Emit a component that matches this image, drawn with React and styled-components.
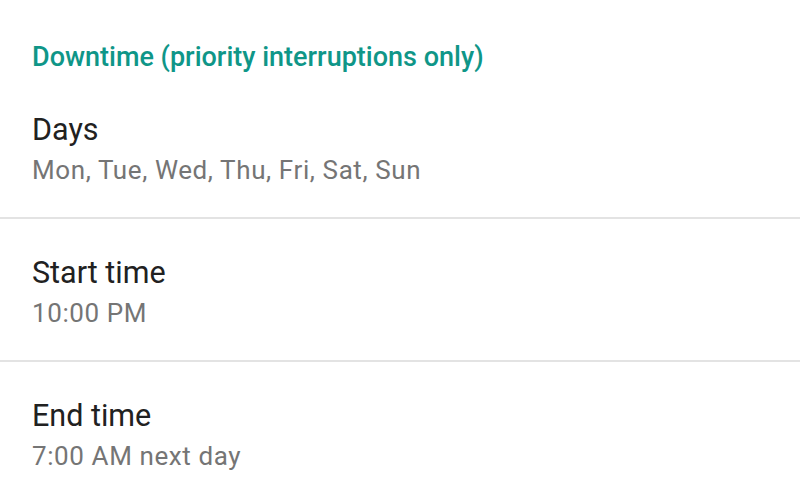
import React from 'react';
import styled, { createGlobalStyle } from 'styled-components';

const GlobalStyle = createGlobalStyle`
  html, body {
    margin: 0;
    padding: 0;
    background: #ffffff;
  }
  body {
    font-family: Roboto, "Liberation Sans", Arial, sans-serif;
    -webkit-font-smoothing: antialiased;
  }
`;

const Screen = styled.div`
  width: 800px;
  height: 502px;
  overflow: hidden;
  background: #ffffff;
  display: flex;
  flex-direction: column;
`;

const SectionHeader = styled.div`
  padding: 40px 32px 0;
  font-size: 27px;
  line-height: 34px;
  font-weight: 500;
  color: #0f9688;
`;

const Row = styled.div`
  padding: ${p => (p.first ? '36px' : '34px')} 32px 30px;
  border-bottom: ${p => (p.last ? 'none' : '2px solid #e3e3e3')};
  display: flex;
  flex-direction: column;
  gap: 3px;
`;

const Title = styled.div`
  font-size: 30.5px;
  line-height: 40px;
  color: #212121;
`;

const Summary = styled.div`
  font-size: 26px;
  line-height: 34px;
  letter-spacing: 0.6px;
  color: #757575;
`;

const settings = [
  { title: 'Days', summary: 'Mon, Tue, Wed, Thu, Fri, Sat, Sun' },
  { title: 'Start time', summary: '10:00 PM' },
  { title: 'End time', summary: '7:00 AM next day' },
];

export default function App() {
  return (
    <Screen>
      <GlobalStyle />
      <SectionHeader>Downtime (priority interruptions only)</SectionHeader>
      {settings.map((s, i) => (
        <Row key={s.title} first={i === 0} last={i === settings.length - 1}>
          <Title>{s.title}</Title>
          <Summary>{s.summary}</Summary>
        </Row>
      ))}
    </Screen>
  );
}
